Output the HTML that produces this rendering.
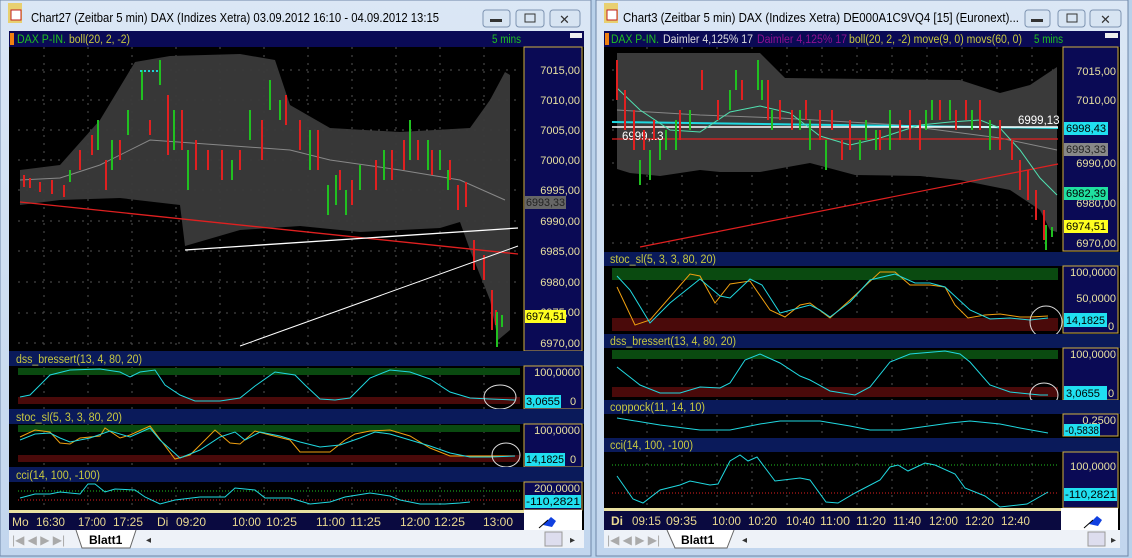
<!DOCTYPE html>
<html><head><meta charset="utf-8"><style>
html,body{margin:0;padding:0;background:#b9d1ea;width:1132px;height:558px;overflow:hidden}
svg{display:block}
text{font-family:"Liberation Sans",sans-serif}
</style></head><body>
<svg width="1132" height="558" viewBox="0 0 1132 558" xmlns="http://www.w3.org/2000/svg">
<defs>
<linearGradient id="tb" x1="0" y1="0" x2="0" y2="1"><stop offset="0" stop-color="#dbe7f5"/><stop offset="1" stop-color="#c2d6ee"/></linearGradient>
</defs>
<rect width="1132" height="558" fill="#b9d1ea"/>
<!-- LEFT WINDOW -->
<rect x="0" y="0" width="591" height="556" fill="url(#tb)" stroke="#6d86a8"/>
<rect x="8" y="3" width="14" height="20" fill="#e8d070"/>
<rect x="11" y="10" width="10" height="10" fill="#fff" stroke="#c02020"/>
<text x="31" y="22" font-size="13" fill="#000" textLength="408" lengthAdjust="spacingAndGlyphs">Chart27 (Zeitbar 5 min)  DAX (Indizes Xetra) 03.09.2012 16:10 - 04.09.2012 13:15</text>
<g fill="#d7e4f2" stroke="#7d93b1"><rect x="483" y="10" width="27" height="17" rx="3"/><rect x="516" y="10" width="28" height="17" rx="3"/><rect x="550" y="10" width="30" height="17" rx="3"/></g>
<rect x="490" y="19" width="12" height="3" fill="#333"/><rect x="525" y="14" width="10" height="8" fill="none" stroke="#333"/><text x="559" y="24" font-size="13" fill="#333">✕</text>
<rect x="9" y="31" width="575" height="517" fill="#000"/>
<rect x="9" y="31" width="575" height="16" fill="#0a0a55"/>
<rect x="10" y="33" width="4" height="12" fill="#f08010"/>
<text x="17" y="43" font-size="11.5" fill="#20c020" textLength="49" lengthAdjust="spacingAndGlyphs">DAX P-IN.</text><text x="69" y="43" font-size="11.5" fill="#c8c840" textLength="61" lengthAdjust="spacingAndGlyphs">boll(20, 2, -2)</text>
<text x="492" y="43" font-size="11.5" fill="#20c020" textLength="29" lengthAdjust="spacingAndGlyphs">5 mins</text>
<rect x="570" y="33" width="12" height="5" fill="#eee"/>
<rect x="524" y="47" width="58" height="304" fill="#0a0a55" stroke="#d0b040" stroke-width="1"/>
<g font-size="11" fill="#e8e0a0" text-anchor="end">
<text x="580" y="74">7015,00</text><text x="580" y="104">7010,00</text><text x="580" y="134">7005,00</text><text x="580" y="164">7000,00</text><text x="580" y="194">6995,00</text><text x="580" y="225">6990,00</text><text x="580" y="255">6985,00</text><text x="580" y="286">6980,00</text><text x="580" y="316">6975,00</text><text x="580" y="347">6970,00</text></g>
<rect x="525" y="196" width="41" height="13" fill="#666"/><text x="526" y="206" font-size="11" fill="#222" textLength="39" lengthAdjust="spacingAndGlyphs">6993,33</text>
<rect x="525" y="310" width="41" height="13" fill="#ffff20"/><text x="526" y="320" font-size="11" fill="#000" textLength="39" lengthAdjust="spacingAndGlyphs">6974,51</text>
<g stroke="#555" stroke-dasharray="2,6" stroke-width="1">
<line x1="18" y1="70" x2="520" y2="70"/><line x1="18" y1="100" x2="520" y2="100"/><line x1="18" y1="130" x2="520" y2="130"/><line x1="18" y1="160" x2="520" y2="160"/><line x1="18" y1="190" x2="520" y2="190"/><line x1="18" y1="221" x2="520" y2="221"/><line x1="18" y1="251" x2="520" y2="251"/><line x1="18" y1="282" x2="520" y2="282"/><line x1="18" y1="313" x2="520" y2="313"/><line x1="18" y1="343" x2="520" y2="343"/>
<line x1="44" y1="47" x2="44" y2="510"/><line x1="88" y1="47" x2="88" y2="510"/><line x1="132" y1="47" x2="132" y2="510"/><line x1="176" y1="47" x2="176" y2="510"/><line x1="220" y1="47" x2="220" y2="510"/><line x1="264" y1="47" x2="264" y2="510"/><line x1="308" y1="47" x2="308" y2="510"/><line x1="352" y1="47" x2="352" y2="510"/><line x1="396" y1="47" x2="396" y2="510"/><line x1="440" y1="47" x2="440" y2="510"/><line x1="484" y1="47" x2="484" y2="510"/>
</g>
<path d="M20,170 L60,165 L100,120 L135,62 L170,56 L240,54 L275,60 L290,105 L330,128 L400,132 L470,128 L490,100 L505,72 L510,75 L510,330 L498,340 L490,300 L470,250 L460,222 L440,228 L360,232 L300,226 L240,230 L185,246 L180,205 L120,198 L60,200 L20,205 Z" fill="#3a3a3a" opacity="0.95"/>
<path d="M20,180 L60,178 L100,165 L150,140 L220,145 L290,150 L330,160 L400,170 L460,180 L505,200" fill="none" stroke="#888" stroke-width="1"/>
<g stroke-width="2" fill="none">
<path stroke="#e02020" d="M24,175v12M30,178v10M40,182v10M52,180v14M64,185v12M80,150v20M92,135v20M106,160v30M120,140v20M150,120v15M168,95v60M182,110v40M196,140v30M208,150v20M222,150v30M240,150v20M262,120v40M286,95v30M300,120v30M318,130v40M340,170v20M352,180v25M376,160v30M392,150v30M404,140v30M418,140v20M432,150v25M450,160v20M458,185v25M466,182v25M474,240v30M484,255v25M492,290v40M496,310v15"/>
<path stroke="#20c020" d="M70,170v12M98,120v30M112,140v30M128,110v25M142,70v30M160,60v25M174,110v40M188,150v40M232,160v20M250,110v30M270,80v30M280,100v20M310,130v40M328,185v30M336,175v30M346,190v25M360,165v25M384,150v30M410,120v40M428,140v30M440,150v20M448,170v20M497,312v35M502,315v12"/>
</g>
<line x1="140" y1="71" x2="158" y2="71" stroke="#20d0d0" stroke-dasharray="2,2" stroke-width="2"/>
<line x1="20" y1="202" x2="518" y2="254" stroke="#e02020" stroke-width="1.3"/>
<line x1="185" y1="250" x2="518" y2="228" stroke="#fff" stroke-width="1.3"/>
<line x1="240" y1="346" x2="518" y2="246" stroke="#fff" stroke-width="1"/>
<rect x="9" y="351" width="575" height="15" fill="#0a1a5a"/>
<text x="16" y="363" font-size="11.5" fill="#c8c840" textLength="126" lengthAdjust="spacingAndGlyphs">dss_bressert(13, 4, 80, 20)</text>
<rect x="18" y="368" width="502" height="7" fill="#0a4a10"/><rect x="18" y="397" width="502" height="7" fill="#4a0a0a"/>
<rect x="524" y="366" width="58" height="43" fill="#0a0a55" stroke="#d0b040"/>
<text x="580" y="376" font-size="11" fill="#e8e0a0" text-anchor="end">100,0000</text>
<rect x="525" y="395" width="36" height="13" fill="#20e0f0"/><text x="526" y="405" font-size="11" fill="#000" textLength="34" lengthAdjust="spacingAndGlyphs">3,0655</text><text x="570" y="405" font-size="11" fill="#e8e0a0">0</text>
<polyline fill="none" stroke="#20d8e0" points="20,397 30,395 50,375 70,370 100,369 120,372 130,377 140,372 155,370 165,385 180,395 195,401 220,401 240,398 255,386 275,372 295,375 305,385 320,399 335,400 350,398 370,378 390,370 410,372 430,379 450,392 470,398 490,399 515,400"/>
<ellipse cx="500" cy="397" rx="16" ry="12" fill="none" stroke="#ddd"/>
<rect x="9" y="409" width="575" height="15" fill="#0a1a5a"/>
<text x="16" y="421" font-size="11.5" fill="#c8c840" textLength="106" lengthAdjust="spacingAndGlyphs">stoc_sl(5, 3, 3, 80, 20)</text>
<rect x="18" y="425" width="502" height="7" fill="#0a4a10"/><rect x="18" y="455" width="502" height="7" fill="#4a0a0a"/>
<rect x="524" y="424" width="58" height="43" fill="#0a0a55" stroke="#d0b040"/>
<text x="580" y="434" font-size="11" fill="#e8e0a0" text-anchor="end">100,0000</text>
<rect x="525" y="453" width="40" height="13" fill="#20e0f0"/><text x="526" y="463" font-size="11" fill="#000" textLength="38" lengthAdjust="spacingAndGlyphs">14,1825</text><text x="570" y="463" font-size="11" fill="#e8e0a0">0</text>
<polyline fill="none" stroke="#f0a010" points="20,437 35,430 50,432 60,443 70,444 80,438 100,436 105,428 120,438 130,435 150,426 175,459 190,455 215,430 230,443 240,444 255,431 270,435 290,440 300,452 330,452 345,440 355,434 370,431 390,430 410,436 430,448 450,456 470,456 490,456 515,456"/>
<polyline fill="none" stroke="#20d8e0" points="20,440 35,434 50,433 60,438 70,442 90,438 110,431 130,437 150,428 160,440 180,458 200,450 220,437 235,432 245,440 260,432 280,436 300,442 320,447 340,445 360,438 375,432 390,434 410,440 430,446 450,453 470,457 490,457 515,456"/>
<ellipse cx="506" cy="455" rx="14" ry="12" fill="none" stroke="#ddd"/>
<rect x="9" y="467" width="575" height="15" fill="#0a1a5a"/>
<text x="16" y="479" font-size="11.5" fill="#c8c840" textLength="84" lengthAdjust="spacingAndGlyphs">cci(14, 100, -100)</text>
<rect x="524" y="482" width="58" height="28" fill="#0a0a55" stroke="#d0b040"/>
<text x="580" y="492" font-size="11" fill="#e8e0a0" text-anchor="end">200,0000</text>
<rect x="525" y="495" width="56" height="13" fill="#20e0f0"/><text x="526" y="505" font-size="11" fill="#000" textLength="54" lengthAdjust="spacingAndGlyphs">-110,2821</text>
<line x1="18" y1="491" x2="520" y2="491" stroke="#20c020" stroke-dasharray="1,2"/><line x1="18" y1="500" x2="520" y2="500" stroke="#e02020" stroke-dasharray="1,2"/>
<polyline fill="none" stroke="#20d8e0" points="20,498 35,494 50,494 60,492 80,494 88,484 95,484 105,492 115,489 135,490 145,497 160,504 175,500 200,497 225,497 235,488 255,490 265,498 290,498 310,504 330,502 345,497 370,493 390,496 400,500 420,504 445,504 460,503 470,502"/>
<rect x="9" y="510" width="515" height="3" fill="#e8e0a0"/>
<rect x="9" y="513" width="515" height="17" fill="#0a0a40"/>
<g font-size="12" fill="#e8d890">
<text x="12" y="526">Mo</text><text x="36" y="526" textLength="29" lengthAdjust="spacingAndGlyphs">16:30</text><text x="78" y="526" textLength="28" lengthAdjust="spacingAndGlyphs">17:00</text><text x="113" y="526" textLength="30" lengthAdjust="spacingAndGlyphs">17:25</text><text x="157" y="526">Di</text><text x="176" y="526" textLength="30" lengthAdjust="spacingAndGlyphs">09:20</text><text x="232" y="526" textLength="29" lengthAdjust="spacingAndGlyphs">10:00</text><text x="266" y="526" textLength="31" lengthAdjust="spacingAndGlyphs">10:25</text><text x="316" y="526" textLength="29" lengthAdjust="spacingAndGlyphs">11:00</text><text x="350" y="526" textLength="31" lengthAdjust="spacingAndGlyphs">11:25</text><text x="400" y="526" textLength="30" lengthAdjust="spacingAndGlyphs">12:00</text><text x="434" y="526" textLength="31" lengthAdjust="spacingAndGlyphs">12:25</text><text x="483" y="526" textLength="30" lengthAdjust="spacingAndGlyphs">13:00</text></g>
<rect x="524" y="510" width="58" height="20" fill="#fff"/><path d="M543,525l8,-8l5,4l-4,6z" fill="#1040e0"/><line x1="539" y1="528" x2="548" y2="520" stroke="#000"/>
<rect x="9" y="530" width="575" height="18" fill="#eef2f8"/>
<text x="12" y="544" font-size="12" fill="#aaa">|◀ ◀ ▶ ▶|</text>
<path d="M76,530 L82,548 L130,548 L136,530" fill="#fff" stroke="#666"/><text x="89" y="544" font-size="12" font-weight="bold" fill="#000">Blatt1</text>
<text x="146" y="543" font-size="10" fill="#333">◂</text><rect x="545" y="532" width="17" height="14" fill="#dde" stroke="#999"/><text x="570" y="543" font-size="10" fill="#333">▸</text>

<!-- RIGHT WINDOW -->
<rect x="596" y="0" width="532" height="556" fill="url(#tb)" stroke="#6d86a8"/>
<rect x="604" y="3" width="14" height="20" fill="#e8d070"/><rect x="607" y="10" width="10" height="10" fill="#fff" stroke="#c02020"/>
<text x="623" y="22" font-size="13" fill="#000" textLength="396" lengthAdjust="spacingAndGlyphs">Chart3 (Zeitbar 5 min)  DAX (Indizes Xetra) DE000A1C9VQ4 [15] (Euronext)...</text>
<g fill="#d7e4f2" stroke="#7d93b1"><rect x="1025" y="10" width="25" height="17" rx="3"/><rect x="1058" y="10" width="27" height="17" rx="3"/><rect x="1090" y="10" width="31" height="17" rx="3"/></g>
<rect x="1031" y="19" width="12" height="3" fill="#333"/><rect x="1067" y="14" width="10" height="8" fill="none" stroke="#333"/><text x="1100" y="24" font-size="13" fill="#333">✕</text>
<rect x="604" y="31" width="516" height="517" fill="#000"/>
<rect x="604" y="31" width="516" height="16" fill="#0a0a55"/>
<rect x="605" y="33" width="4" height="12" fill="#f08010"/>
<g font-size="11.5">
<text x="611" y="43" fill="#20c020" textLength="48" lengthAdjust="spacingAndGlyphs">DAX P-IN.</text><text x="663" y="43" fill="#dddddd" textLength="90" lengthAdjust="spacingAndGlyphs">Daimler  4,125% 17</text><text x="757" y="43" fill="#901090" textLength="90" lengthAdjust="spacingAndGlyphs">Daimler  4,125% 17</text><text x="849" y="43" fill="#c8c840" textLength="173" lengthAdjust="spacingAndGlyphs">boll(20, 2, -2) move(9, 0) movs(60, 0)</text><text x="1034" y="43" fill="#20c020" textLength="29" lengthAdjust="spacingAndGlyphs">5 mins</text></g>
<rect x="1105" y="33" width="13" height="5" fill="#eee"/>
<rect x="1063" y="47" width="55" height="204" fill="#0a0a55" stroke="#d0b040"/>
<g font-size="11" fill="#e8e0a0" text-anchor="end"><text x="1116" y="75">7015,00</text><text x="1116" y="104">7010,00</text><text x="1116" y="167">6990,00</text><text x="1116" y="207">6980,00</text><text x="1116" y="247">6970,00</text></g>
<rect x="1064" y="122" width="44" height="13" fill="#20e0f0"/><text x="1066" y="132" font-size="11" fill="#000" textLength="40" lengthAdjust="spacingAndGlyphs">6998,43</text>
<rect x="1064" y="143" width="44" height="13" fill="#888"/><text x="1066" y="153" font-size="11" fill="#222" textLength="40" lengthAdjust="spacingAndGlyphs">6993,33</text>
<rect x="1064" y="187" width="44" height="13" fill="#20e0a0"/><text x="1066" y="197" font-size="11" fill="#000" textLength="40" lengthAdjust="spacingAndGlyphs">6982,39</text>
<rect x="1064" y="220" width="44" height="13" fill="#ffff20"/><text x="1066" y="230" font-size="11" fill="#000" textLength="40" lengthAdjust="spacingAndGlyphs">6974,51</text>
<g stroke="#555" stroke-dasharray="2,6"><line x1="612" y1="70" x2="1058" y2="70"/><line x1="612" y1="100" x2="1058" y2="100"/><line x1="612" y1="130" x2="1058" y2="130"/><line x1="612" y1="163" x2="1058" y2="163"/><line x1="612" y1="205" x2="1058" y2="205"/><line x1="612" y1="243" x2="1058" y2="243"/>
<line x1="647" y1="47" x2="647" y2="508"/><line x1="682" y1="47" x2="682" y2="508"/><line x1="717" y1="47" x2="717" y2="508"/><line x1="752" y1="47" x2="752" y2="508"/><line x1="787" y1="47" x2="787" y2="508"/><line x1="822" y1="47" x2="822" y2="508"/><line x1="857" y1="47" x2="857" y2="508"/><line x1="892" y1="47" x2="892" y2="508"/><line x1="927" y1="47" x2="927" y2="508"/><line x1="962" y1="47" x2="962" y2="508"/><line x1="997" y1="47" x2="997" y2="508"/><line x1="1032" y1="47" x2="1032" y2="508"/></g>
<path d="M617,53 L760,53 L785,78 L960,80 L1000,93 L1030,85 L1057,67 L1057,232 L1050,230 L1040,210 L1010,190 L960,180 L920,176 L855,175 L810,163 L760,172 L720,172 L700,170 L660,176 L630,173 L617,169 Z" fill="#3a3a3a"/>
<path d="M617,110 L700,115 L780,118 L900,125 L1000,138 L1057,150" fill="none" stroke="#888"/>
<line x1="612" y1="122" x2="1058" y2="128" stroke="#20d8e0" stroke-width="2"/>
<line x1="612" y1="127" x2="1058" y2="127" stroke="#fff" stroke-width="1.5"/>
<line x1="612" y1="139" x2="1058" y2="139" stroke="#e02020" stroke-width="1.2"/>
<line x1="640" y1="247" x2="1058" y2="164" stroke="#e02020" stroke-width="1.2"/>
<polyline fill="none" stroke="#50e0b0" points="617,88 640,110 670,130 700,132 730,112 760,106 790,113 820,136 850,145 880,138 920,125 950,122 980,120 1000,128 1020,150 1040,178 1057,195"/>
<text x="622" y="140" font-size="11.5" fill="#fff">6999,13</text><text x="1018" y="124" font-size="11.5" fill="#fff">6999,13</text>
<g stroke-width="2" fill="none">
<path stroke="#e02020" d="M617,60v40M625,90v40M634,110v40M644,130v20M654,120v20M680,110v30M702,70v20M718,100v20M742,80v20M768,80v40M780,100v20M792,110v20M806,100v20M820,110v30M832,110v20M842,140v20M850,120v30M880,130v20M900,120v20M910,110v30M920,120v30M940,100v20M956,110v20M966,100v20M980,100v30M1000,120v30M1012,140v20M1020,160v30M1028,170v30M1036,190v30M1044,210v30"/>
<path stroke="#20c020" d="M640,160v25M650,150v30M660,140v20M666,130v20M676,120v30M690,110v20M730,90v20M736,70v20M758,60v30M762,80v20M772,110v20M800,110v20M810,120v30M826,140v30M860,140v20M866,120v20M876,130v20M890,110v40M926,110v20M932,100v20M950,100v20M972,110v20M990,120v30M1046,225v25M1052,227v10"/>
</g>
<rect x="604" y="252" width="516" height="14" fill="#0a1a5a"/><text x="610" y="263" font-size="11.5" fill="#c8c840" textLength="106" lengthAdjust="spacingAndGlyphs">stoc_sl(5, 3, 3, 80, 20)</text>
<rect x="612" y="268" width="446" height="12" fill="#0a4a10"/><rect x="612" y="318" width="446" height="13" fill="#4a0a0a"/>
<rect x="1063" y="266" width="55" height="67" fill="#0a0a55" stroke="#d0b040"/>
<text x="1116" y="276" font-size="11" fill="#e8e0a0" text-anchor="end">100,0000</text><text x="1116" y="302" font-size="11" fill="#e8e0a0" text-anchor="end">50,0000</text>
<rect x="1064" y="313" width="43" height="14" fill="#20e0f0"/><text x="1066" y="324" font-size="11" fill="#000" textLength="39" lengthAdjust="spacingAndGlyphs">14,1825</text><text x="1108" y="330" font-size="11" fill="#e8e0a0">0</text>
<polyline fill="none" stroke="#f0a010" points="617,287 635,325 650,320 690,274 700,276 715,303 730,284 750,281 770,310 785,317 800,305 810,303 830,318 850,300 880,272 895,272 910,285 930,285 945,287 955,305 968,318 985,315 1000,314 1020,317 1030,317 1048,316"/>
<polyline fill="none" stroke="#20d8e0" points="617,276 630,290 650,323 670,303 700,279 720,296 730,298 750,279 762,285 780,313 810,305 820,310 830,317 850,302 870,280 895,274 915,283 930,283 945,287 970,310 990,319 1010,318 1030,320 1048,318"/>
<ellipse cx="1046" cy="322" rx="16" ry="16" fill="none" stroke="#ddd"/>
<rect x="604" y="334" width="516" height="14" fill="#0a1a5a"/><text x="610" y="345" font-size="11.5" fill="#c8c840" textLength="126" lengthAdjust="spacingAndGlyphs">dss_bressert(13, 4, 80, 20)</text>
<rect x="612" y="350" width="446" height="9" fill="#0a4a10"/><rect x="612" y="387" width="446" height="10" fill="#4a0a0a"/>
<rect x="1063" y="348" width="55" height="52" fill="#0a0a55" stroke="#d0b040"/>
<text x="1116" y="358" font-size="11" fill="#e8e0a0" text-anchor="end">100,0000</text>
<rect x="1064" y="386" width="43" height="14" fill="#20e0f0"/><text x="1066" y="397" font-size="11" fill="#000" textLength="34" lengthAdjust="spacingAndGlyphs">3,0655</text><text x="1108" y="397" font-size="11" fill="#e8e0a0">0</text>
<polyline fill="none" stroke="#20d8e0" points="617,367 640,385 660,393 680,393 700,387 720,388 730,383 745,360 760,354 780,363 800,376 810,380 830,391 855,395 870,387 890,362 910,354 945,351 960,354 970,362 990,385 1010,392 1040,395 1048,395"/>
<ellipse cx="1044" cy="395" rx="14" ry="12" fill="none" stroke="#ddd"/>
<rect x="604" y="400" width="516" height="14" fill="#0a1a5a"/><text x="610" y="411" font-size="11.5" fill="#c8c840" textLength="95" lengthAdjust="spacingAndGlyphs">coppock(11, 14, 10)</text>
<rect x="1063" y="414" width="55" height="22" fill="#0a0a55" stroke="#d0b040"/>
<text x="1116" y="424" font-size="11" fill="#e8e0a0" text-anchor="end">0,2500</text>
<rect x="1064" y="424" width="36" height="12" fill="#20e0f0"/><text x="1065" y="434" font-size="11" fill="#000" textLength="34" lengthAdjust="spacingAndGlyphs">-0,5838</text>
<polyline fill="none" stroke="#20d8e0" points="617,418 660,425 700,430 730,430 760,424 780,421 820,421 850,426 870,430 900,430 950,423 970,421 1000,424 1020,428 1048,433"/>
<rect x="604" y="438" width="516" height="14" fill="#0a1a5a"/><text x="610" y="449" font-size="11.5" fill="#c8c840" textLength="83" lengthAdjust="spacingAndGlyphs">cci(14, 100, -100)</text>
<rect x="1063" y="452" width="55" height="56" fill="#0a0a55" stroke="#d0b040"/>
<text x="1116" y="470" font-size="11" fill="#e8e0a0" text-anchor="end">100,0000</text>
<rect x="1064" y="488" width="53" height="13" fill="#20e0f0"/><text x="1065" y="498" font-size="11" fill="#000" textLength="51" lengthAdjust="spacingAndGlyphs">-110,2821</text>
<line x1="612" y1="465" x2="1058" y2="465" stroke="#20c020" stroke-dasharray="1,2"/><line x1="612" y1="493" x2="1058" y2="493" stroke="#e02020" stroke-dasharray="1,2"/>
<polyline fill="none" stroke="#20d8e0" points="617,476 633,499 643,503 660,490 680,485 690,481 710,485 718,484 730,461 740,455 748,461 757,457 775,481 800,478 810,480 826,502 838,503 855,493 880,480 890,467 898,465 908,471 925,463 935,465 955,474 965,488 985,496 1000,507 1027,504 1048,492"/>
<rect x="604" y="508" width="457" height="3" fill="#e8e0a0"/>
<rect x="604" y="511" width="457" height="19" fill="#0a0a40"/>
<g font-size="12" fill="#e8d890">
<text x="611" y="525" font-weight="bold">Di</text><text x="632" y="525" textLength="29" lengthAdjust="spacingAndGlyphs">09:15</text><text x="666" y="525" textLength="31" lengthAdjust="spacingAndGlyphs">09:35</text><text x="712" y="525" textLength="29" lengthAdjust="spacingAndGlyphs">10:00</text><text x="748" y="525" textLength="29" lengthAdjust="spacingAndGlyphs">10:20</text><text x="786" y="525" textLength="29" lengthAdjust="spacingAndGlyphs">10:40</text><text x="820" y="525" textLength="30" lengthAdjust="spacingAndGlyphs">11:00</text><text x="856" y="525" textLength="30" lengthAdjust="spacingAndGlyphs">11:20</text><text x="893" y="525" textLength="28" lengthAdjust="spacingAndGlyphs">11:40</text><text x="929" y="525" textLength="29" lengthAdjust="spacingAndGlyphs">12:00</text><text x="965" y="525" textLength="29" lengthAdjust="spacingAndGlyphs">12:20</text><text x="1001" y="525" textLength="29" lengthAdjust="spacingAndGlyphs">12:40</text></g>
<rect x="1061" y="508" width="57" height="22" fill="#fff"/><path d="M1089,524l8,-8l5,4l-4,6z" fill="#1040e0"/><line x1="1084" y1="528" x2="1093" y2="520" stroke="#000"/>
<rect x="604" y="530" width="516" height="18" fill="#eef2f8"/>
<text x="607" y="544" font-size="12" fill="#aaa">|◀ ◀ ▶ ▶|</text>
<path d="M667,530 L675,548 L727,548 L734,530" fill="#fff" stroke="#666"/><text x="681" y="544" font-size="12" font-weight="bold" fill="#000">Blatt1</text>
<text x="742" y="543" font-size="10" fill="#333">◂</text><rect x="1088" y="532" width="17" height="14" fill="#dde" stroke="#999"/><text x="1111" y="543" font-size="10" fill="#333">▸</text>
</svg>
</body></html>
